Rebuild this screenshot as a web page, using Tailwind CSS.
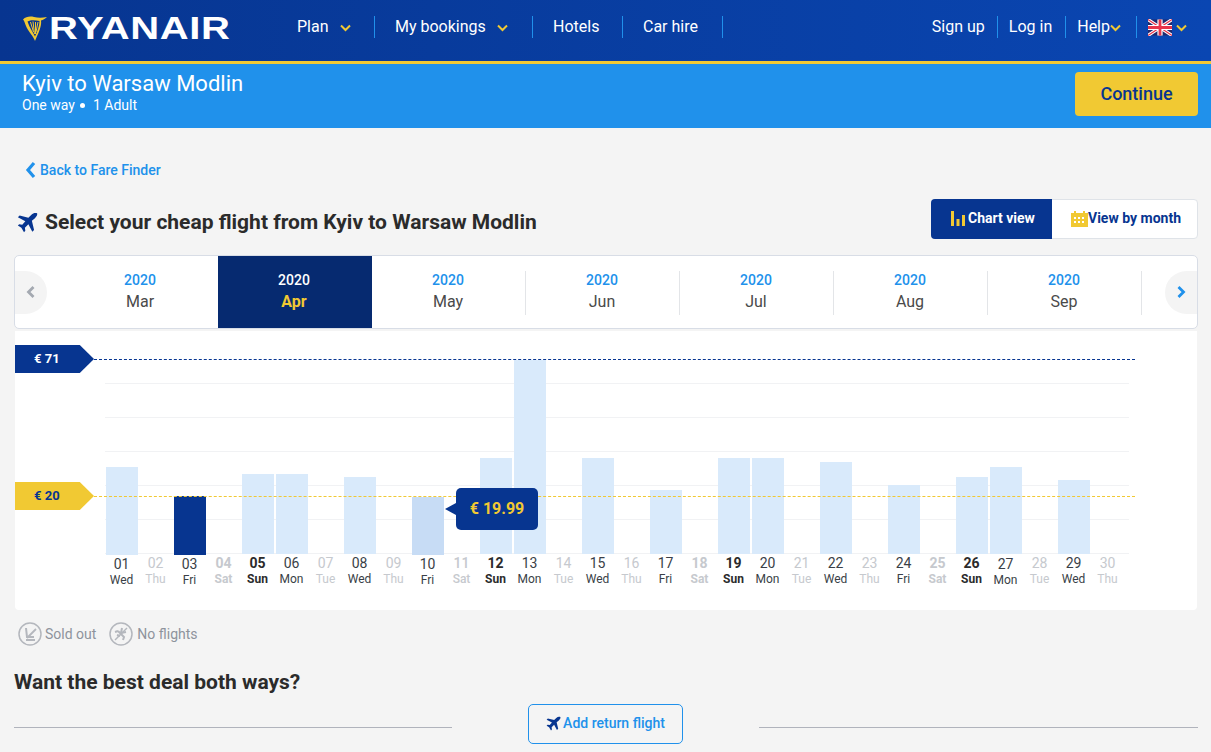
<!DOCTYPE html>
<html>
<head>
<meta charset="utf-8">
<script src="https://cdn.jsdelivr.net/npm/@tailwindcss/browser@4"></script>
</head>
<body class="w-[1211px] h-[752px] overflow-hidden bg-[#f4f4f4] font-['Roboto',sans-serif] text-[#2b2b2b]">

<header class="h-[64px] bg-gradient-to-r from-[#073590] to-[#0a46b2] border-b-[3px] border-[#f1c933] flex items-center text-white text-[16px]">
  <div class="w-[276px] h-[61px] flex items-center pl-[23px] shrink-0">
    <svg width="24" height="25" viewBox="0 0 24 25" class="shrink-0 -mt-[5px]"><path d="M0 3.500 C3 .5 7 0 11 1 C15 2 19 2 24 1 C22 3 20 4 18 4.500 C19 10 15 18 12 25 C11 21 5 15 3 10 C2 7.500 1.500 5 0 3.500Z" fill="#f1c933"/><path d="M4.500 5.500 C8 3.500 12 4 16.500 5 C16.500 10 14.500 15 12 20.500 C10 16 6.500 12 4.500 5.500Z" fill="#073590"/><path d="M7.500 6 L10.500 16 M10 5.500 L11.500 18 M12.500 6 L12.500 18 M15 6 L13 16" stroke="#f1c933" stroke-width="1"/></svg>
    <span class="ml-[2px] font-['Liberation_Sans',sans-serif] font-bold text-[31px] leading-none tracking-[0.5px] origin-left scale-x-[1.29] -mt-[4px]">RYANAIR</span>
  </div>
  <nav class="flex items-center h-[61px] pb-[7px]">
    <a class="h-[22px] flex items-center pl-[21px] w-[99px] border-r border-[#2091eb]">Plan<svg class="ml-[11px] mt-[1px]" width="11" height="8" viewBox="0 0 11 8"><path d="M1 1.500 L5.500 6 L10 1.500" fill="none" stroke="#f1c933" stroke-width="2"/></svg></a>
    <a class="h-[22px] flex items-center pl-[20px] w-[158px] border-r border-[#2091eb]">My bookings<svg class="ml-[11px] mt-[1px]" width="11" height="8" viewBox="0 0 11 8"><path d="M1 1.500 L5.500 6 L10 1.500" fill="none" stroke="#f1c933" stroke-width="2"/></svg></a>
    <a class="h-[22px] flex items-center pl-[20px] w-[90px] border-r border-[#2091eb]">Hotels</a>
    <a class="h-[22px] flex items-center pl-[20px] w-[100px] border-r border-[#2091eb]">Car hire</a>
  </nav>
  <div class="ml-auto flex items-center h-[61px] pr-[24px] pb-[7px]">
    <a class="h-[22px] flex items-center pr-[12px] border-r border-[#2091eb]">Sign up</a>
    <a class="h-[22px] flex items-center pl-[11px] pr-[13px] border-r border-[#2091eb]">Log in</a>
    <a class="h-[22px] flex items-center pl-[11px] pr-[15px] border-r border-[#2091eb]">Help<svg class="mt-[1px]" width="11" height="8" viewBox="0 0 11 8"><path d="M1 1.500 L5.500 6 L10 1.500" fill="none" stroke="#f1c933" stroke-width="2"/></svg></a>
    <a class="h-[22px] flex items-center pl-[11px]">
      <svg width="24" height="17" viewBox="0 0 60 40"><rect width="60" height="40" fill="#1f2a6e"/><path d="M0 0 L60 40 M60 0 L0 40" stroke="#fff" stroke-width="8"/><path d="M0 0 L60 40 M60 0 L0 40" stroke="#e8344a" stroke-width="3"/><path d="M30 0 V40 M0 20 H60" stroke="#fff" stroke-width="13"/><path d="M30 0 V40 M0 20 H60" stroke="#e8344a" stroke-width="7"/></svg>
      <svg class="ml-[4px] mt-[1px]" width="11" height="8" viewBox="0 0 11 8"><path d="M1 1.500 L5.500 6 L10 1.500" fill="none" stroke="#f1c933" stroke-width="2"/></svg>
    </a>
  </div>
</header>

<section class="h-[64px] bg-[#2091eb] text-white flex items-start justify-between pl-[22px] pr-[13px] pt-[7px]">
  <div>
    <div class="text-[22px] leading-[26px]">Kyiv to Warsaw Modlin</div>
    <div class="text-[14px] leading-[16px] flex items-center">One way<span class="ml-[5px] mr-[8px] w-[5px] h-[5px] rounded-full bg-white"></span>1 Adult</div>
  </div>
  <button class="mt-[1px] w-[123px] h-[44px] pb-[1px] rounded-[4px] bg-[#f1c933] text-[#073590] text-[18px] font-medium">Continue</button>
</section>

<main class="px-[14px]">
  <a class="mt-[33px] h-[18px] flex items-center pl-[11px] text-[#2091eb] text-[14px] font-medium">
    <svg class="mr-[4px]" width="11" height="18" viewBox="0 0 11 18"><path d="M9 2 L3 9 L9 16" fill="none" stroke="#2091eb" stroke-width="3.200"/></svg>Back to Fare Finder
  </a>

  <div class="mt-[20px] h-[40px] flex items-center justify-between">
    <h1 class="flex items-center text-[21px] font-bold leading-none mt-[6px] pl-[3px]">
      <svg class="mr-[7px]" width="21" height="21" viewBox="0 0 24 24"><path d="M23 1.500 C21 .5 18.500 1 16.500 3 L13 6.500 L3 4 L1 6 L9.500 10.500 L6 14.500 L2.500 14 L1 15.500 L5 18 L8 23 L9.500 21.500 L9 18 L13 14 L17.500 22.500 L19.500 20.500 L17 10 L20.500 7 C22.500 5 23.500 3.500 23 1.500Z" fill="#073590"/></svg>
      Select your cheap flight from Kyiv to Warsaw Modlin
    </h1>
    <div class="flex h-[40px] w-[267px] mr-[-1px] text-[14px] font-bold rounded-[4px] bg-white border border-[#dfe3e8]">
      <div class="w-[121px] -m-[1px] h-[40px] mr-0 pb-[2px] pl-[2px] rounded-l-[4px] bg-[#073590] text-white flex items-center justify-center">
        <svg class="mr-[3px] ml-[1px]" width="14" height="16" viewBox="0 0 14 16"><path d="M0 1h3v15H0zM5.500 9h3v7h-3zM11 5h3v11h-3z" fill="#f1c933"/></svg>Chart view
      </div>
      <div class="flex-1 flex items-center justify-center pb-[1px] pl-[3px] text-[#073590]">
        <svg width="17" height="16" viewBox="0 0 17 16"><path d="M0 2h3V0h2v2h7V0h2v2h3v14H0z" fill="#f1c933"/><path d="M3 6h2v2H3zM7 6h2v2H7zM11 6h2v2h-2zM3 10h2v2H3zM7 10h2v2H7zM11 10h2v2h-2z" fill="#fff"/></svg>View by month
      </div>
    </div>
  </div>

  <div class="mt-[16px] h-[74px] w-[1184px] bg-white border border-[#d8dde6] rounded-[5px] flex items-center overflow-hidden">
    <div class="w-[32px] h-[43px] bg-[#f4f4f4] rounded-r-full flex items-center justify-center shrink-0">
      <svg width="12" height="14" viewBox="0 0 12 14"><path d="M8.500 2 L3.500 7 L8.500 12" fill="none" stroke="#a4a9b1" stroke-width="2.800"/></svg>
    </div>
    <div class="flex h-full ml-[17px] text-[16px] text-center">
      <div class="w-[154px] h-[72px] pr-[2px] pb-[1px] flex flex-col justify-center"><div class="text-[14px] leading-[20px] mb-[1px] font-medium text-[#2091eb]">2020</div><div class="leading-[22px] text-[#4a4a4a]">Mar</div></div>
      <div class="w-[154px] h-[72px] pr-[2px] pb-[1px] bg-[#062a70] flex flex-col justify-center"><div class="text-[14px] leading-[20px] mb-[1px] font-medium text-white">2020</div><div class="leading-[22px] font-bold text-[#f1c933]">Apr</div></div>
      <div class="w-[154px] h-[72px] pr-[2px] pb-[1px] flex flex-col justify-center"><div class="text-[14px] leading-[20px] mb-[1px] font-medium text-[#2091eb]">2020</div><div class="leading-[22px] text-[#4a4a4a]">May</div></div>
      <div class="w-[154px] h-[72px] pr-[2px] pb-[1px] flex flex-col justify-center relative"><span class="absolute -left-px top-[15px] h-[44px] w-px bg-[#e3e5e8]"></span><div class="text-[14px] leading-[20px] mb-[1px] font-medium text-[#2091eb]">2020</div><div class="leading-[22px] text-[#4a4a4a]">Jun</div></div>
      <div class="w-[154px] h-[72px] pr-[2px] pb-[1px] flex flex-col justify-center relative"><span class="absolute -left-px top-[15px] h-[44px] w-px bg-[#e3e5e8]"></span><div class="text-[14px] leading-[20px] mb-[1px] font-medium text-[#2091eb]">2020</div><div class="leading-[22px] text-[#4a4a4a]">Jul</div></div>
      <div class="w-[154px] h-[72px] pr-[2px] pb-[1px] flex flex-col justify-center relative"><span class="absolute -left-px top-[15px] h-[44px] w-px bg-[#e3e5e8]"></span><div class="text-[14px] leading-[20px] mb-[1px] font-medium text-[#2091eb]">2020</div><div class="leading-[22px] text-[#4a4a4a]">Aug</div></div>
      <div class="w-[154px] h-[72px] pr-[2px] pb-[1px] flex flex-col justify-center relative"><span class="absolute -left-px top-[15px] h-[44px] w-px bg-[#e3e5e8]"></span><span class="absolute right-0 top-[15px] h-[44px] w-px bg-[#e3e5e8]"></span><div class="text-[14px] leading-[20px] mb-[1px] font-medium text-[#2091eb]">2020</div><div class="leading-[22px] text-[#4a4a4a]">Sep</div></div>
    </div>
    <div class="ml-auto w-[32px] h-[43px] bg-[#f4f4f4] rounded-l-full flex items-center justify-center shrink-0">
      <svg width="12" height="14" viewBox="0 0 12 14"><path d="M3.500 2 L8.500 7 L3.500 12" fill="none" stroke="#2091eb" stroke-width="2.800"/></svg>
    </div>
  </div>

  <!-- chart -->
  <div class="relative mt-[2px] ml-[1px] w-[1182px] h-[279px] bg-white rounded-b-[4px] pl-[90px] pt-[52px]">
    <div class="w-[1024px] h-[171px] flex flex-col justify-between">
      <div class="h-px bg-[#f1f2f4]"></div><div class="h-px bg-[#f1f2f4]"></div><div class="h-px bg-[#f1f2f4]"></div><div class="h-px bg-[#f1f2f4]"></div><div class="h-px bg-[#f1f2f4]"></div><div class="h-px bg-[#f1f2f4]"></div>
    </div>

    <!-- bars -->
    <div class="absolute left-[90px] top-[28px] w-[1020px] grid grid-cols-[repeat(30,1fr)]">
      <div class="h-[195px] flex items-end px-px"><div class="w-full h-[88px] -mb-px bg-[#d9eafb]"></div></div>
      <div></div>
      <div class="h-[195px] flex items-end px-px"><div class="w-full h-[59px] -mb-px bg-[#073590]"></div></div>
      <div></div>
      <div class="h-[195px] flex items-end px-px"><div class="w-full h-[80px] bg-[#d9eafb]"></div></div>
      <div class="h-[195px] flex items-end px-px"><div class="w-full h-[80px] bg-[#d9eafb]"></div></div>
      <div></div>
      <div class="h-[195px] flex items-end px-px"><div class="w-full h-[77px] bg-[#d9eafb]"></div></div>
      <div></div>
      <div class="h-[195px] flex items-end px-px"><div class="w-full h-[58px] -mb-px bg-[#c7dcf5]"></div></div>
      <div></div>
      <div class="h-[195px] flex items-end px-px"><div class="w-full h-[96px] bg-[#d9eafb]"></div></div>
      <div class="h-[195px] flex items-end px-px"><div class="w-full h-[194px] bg-[#d9eafb]"></div></div>
      <div></div>
      <div class="h-[195px] flex items-end px-px"><div class="w-full h-[96px] bg-[#d9eafb]"></div></div>
      <div></div>
      <div class="h-[195px] flex items-end px-px"><div class="w-full h-[64px] bg-[#d9eafb]"></div></div>
      <div></div>
      <div class="h-[195px] flex items-end px-px"><div class="w-full h-[96px] bg-[#d9eafb]"></div></div>
      <div class="h-[195px] flex items-end px-px"><div class="w-full h-[96px] bg-[#d9eafb]"></div></div>
      <div></div>
      <div class="h-[195px] flex items-end px-px"><div class="w-full h-[92px] bg-[#d9eafb]"></div></div>
      <div></div>
      <div class="h-[195px] flex items-end px-px"><div class="w-full h-[69px] bg-[#d9eafb]"></div></div>
      <div></div>
      <div class="h-[195px] flex items-end px-px"><div class="w-full h-[77px] bg-[#d9eafb]"></div></div>
      <div class="h-[195px] flex items-end px-px"><div class="w-full h-[87px] bg-[#d9eafb]"></div></div>
      <div></div>
      <div class="h-[195px] flex items-end px-px"><div class="w-full h-[74px] bg-[#d9eafb]"></div></div>
      <div></div>
    </div>

    <!-- day labels -->
    <div class="absolute left-[89.5px] top-[224px] w-[1020px] grid grid-cols-[repeat(30,1fr)] text-center text-[14px] leading-[16px]">
      <div class="translate-y-[1px] text-[#3a3f47]">01<div class="text-[12px]">Wed</div></div>
      <div class="text-[#c6c9ce]">02<div class="text-[12px]">Thu</div></div>
      <div class="translate-y-[1px] text-[#3a3f47]">03<div class="text-[12px]">Fri</div></div>
      <div class="font-bold text-[#c6c9ce]">04<div class="text-[12px]">Sat</div></div>
      <div class="font-bold text-[#2b2b2b]">05<div class="text-[12px]">Sun</div></div>
      <div class="text-[#3a3f47]">06<div class="text-[12px]">Mon</div></div>
      <div class="text-[#c6c9ce]">07<div class="text-[12px]">Tue</div></div>
      <div class="text-[#3a3f47]">08<div class="text-[12px]">Wed</div></div>
      <div class="text-[#c6c9ce]">09<div class="text-[12px]">Thu</div></div>
      <div class="translate-y-[1px] text-[#3a3f47]">10<div class="text-[12px]">Fri</div></div>
      <div class="font-medium text-[#c6c9ce]">11<div class="text-[12px]">Sat</div></div>
      <div class="font-bold text-[#2b2b2b]">12<div class="text-[12px]">Sun</div></div>
      <div class="text-[#3a3f47]">13<div class="text-[12px]">Mon</div></div>
      <div class="text-[#c6c9ce]">14<div class="text-[12px]">Tue</div></div>
      <div class="text-[#3a3f47]">15<div class="text-[12px]">Wed</div></div>
      <div class="text-[#c6c9ce]">16<div class="text-[12px]">Thu</div></div>
      <div class="text-[#3a3f47]">17<div class="text-[12px]">Fri</div></div>
      <div class="font-bold text-[#c6c9ce]">18<div class="text-[12px]">Sat</div></div>
      <div class="font-bold text-[#2b2b2b]">19<div class="text-[12px]">Sun</div></div>
      <div class="text-[#3a3f47]">20<div class="text-[12px]">Mon</div></div>
      <div class="text-[#c6c9ce]">21<div class="text-[12px]">Tue</div></div>
      <div class="text-[#3a3f47]">22<div class="text-[12px]">Wed</div></div>
      <div class="text-[#c6c9ce]">23<div class="text-[12px]">Thu</div></div>
      <div class="text-[#3a3f47]">24<div class="text-[12px]">Fri</div></div>
      <div class="font-bold text-[#c6c9ce]">25<div class="text-[12px]">Sat</div></div>
      <div class="font-bold text-[#2b2b2b]">26<div class="text-[12px]">Sun</div></div>
      <div class="translate-y-[1px] text-[#3a3f47]">27<div class="text-[12px]">Mon</div></div>
      <div class="text-[#c6c9ce]">28<div class="text-[12px]">Tue</div></div>
      <div class="text-[#3a3f47]">29<div class="text-[12px]">Wed</div></div>
      <div class="text-[#c6c9ce]">30<div class="text-[12px]">Thu</div></div>
    </div>

    <!-- price markers -->
    <div class="absolute left-0 top-[14px] w-[79px] h-[28px] bg-[#073590] text-white text-[13px] font-bold flex items-center pl-[19px] [clip-path:polygon(0_0,82%_0,100%_50%,82%_100%,0_100%)]">€ 71</div>
    <div class="absolute left-[79px] top-[28px] w-[1041px] border-t border-dashed border-[#073590]"></div>
    <div class="absolute left-0 top-[151px] w-[79px] h-[28px] bg-[#f1c933] text-[#073590] text-[13px] font-bold flex items-center pl-[19px] [clip-path:polygon(0_0,82%_0,100%_50%,82%_100%,0_100%)]">€ 20</div>
    <div class="absolute left-[79px] top-[165px] w-[1041px] border-t border-dashed border-[#f1c933]"></div>

    <!-- tooltip -->
    <div class="absolute left-[441px] top-[157px] w-[82px] h-[42px] rounded-[5px] bg-[#073590] text-[#f1c933] text-[16px] font-bold flex items-center justify-center">€ 19.99
      <span class="absolute -left-[11px] top-[15px] w-0 h-0 border-y-[6px] border-y-transparent border-r-[11px] border-r-[#073590]"></span>
    </div>
  </div>

  <!-- legend -->
  <div class="mt-[12px] ml-[4px] h-[24px] flex items-center text-[14px] text-[#8e939c]">
    <svg class="mr-[3px]" width="24" height="24" viewBox="0 0 24 24" fill="none" stroke="#b4b7bd" stroke-width="1.500"><circle cx="12" cy="12" r="11"/><path d="M8 6 L9 15 H16 M8 18 H17" stroke-width="2"/><path d="M18 7 L9 16" stroke-width="1.800"/></svg>Sold out
    <svg class="ml-[13px] mr-[4px]" width="24" height="24" viewBox="0 0 24 24" fill="none" stroke="#b4b7bd" stroke-width="1.500"><circle cx="12" cy="12" r="11"/><path d="M18 6 L6 18"/><path d="M9 9 L15 15 L14 18 M9 9 L6 10 M11 14 L8 13 M13 6 L12 11 L17 10" stroke-width="2"/></svg>No flights
  </div>

  <h2 class="mt-[24px] text-[21px] leading-[24px] font-bold">Want the best deal both ways?</h2>

  <div class="mt-[10px] flex items-center w-[1184px]">
    <div class="w-[438px] h-px mt-[6px] bg-[#b0b3bc]"></div>
    <button class="ml-[76px] w-[155px] h-[40px] pb-[1px] rounded-[5px] border border-[#2091eb] text-[#2091eb] text-[14px] font-medium flex items-center justify-center">
      <svg class="mr-[2px]" width="15" height="15" viewBox="0 0 24 24"><path d="M23 1.500 C21 .5 18.500 1 16.500 3 L13 6.500 L3 4 L1 6 L9.500 10.500 L6 14.500 L2.500 14 L1 15.500 L5 18 L8 23 L9.500 21.500 L9 18 L13 14 L17.500 22.500 L19.500 20.500 L17 10 L20.500 7 C22.500 5 23.500 3.500 23 1.500Z" fill="#073590"/></svg>Add return flight
    </button>
    <div class="ml-[76px] flex-1 h-px mt-[6px] bg-[#b0b3bc]"></div>
  </div>
</main>
</body>
</html>
